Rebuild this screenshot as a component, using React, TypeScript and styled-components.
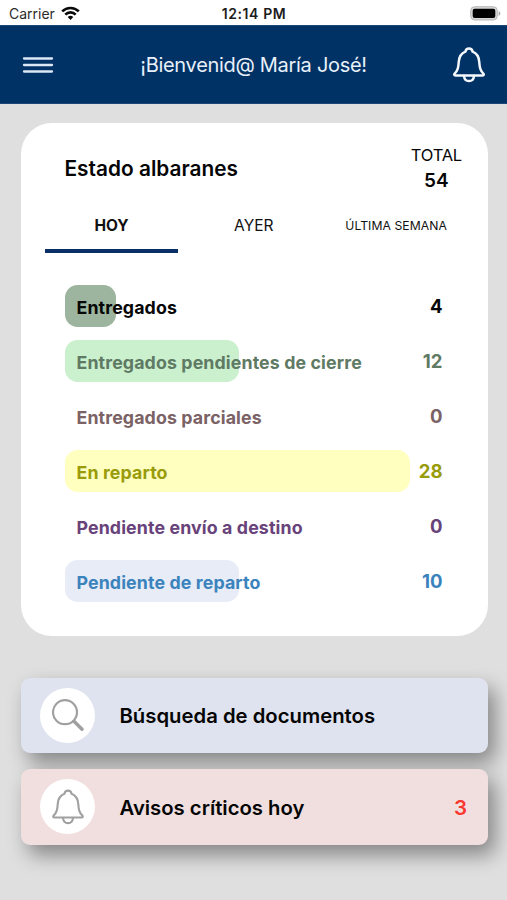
import React from "react";
import styled, { createGlobalStyle } from "styled-components";

const GlobalStyle = createGlobalStyle`
  * { box-sizing: border-box; }
  body {
    margin: 0;
    background: #dfdfdf;
    font-family: Inter, "Liberation Sans", sans-serif;
    color: #050505;
  }
`;

const Screen = styled.div`
  display: flex;
  flex-direction: column;
  width: 507px;
  height: 900px;
  overflow: hidden;
  background: #dfdfdf;
`;

const StatusBar = styled.div`
  display: grid;
  grid-template-columns: 1fr auto 1fr;
  align-items: center;
  height: 25px;
  padding: 2px 6px 0 9px;
  background: #fff;
  line-height: 18px;
`;

const Carrier = styled.div`
  display: flex;
  align-items: center;
  gap: 6px;
  font-size: 14px;
  letter-spacing: 0;
  color: #2b2b2b;
`;

const Clock = styled.div`
  padding-right: 2px;
  font-size: 14px;
  font-weight: 600;
  letter-spacing: 0.6px;
  color: #1c1c1c;
`;

const BatteryIcon = styled.svg`
  justify-self: end;
`;

const Header = styled.header`
  display: flex;
  align-items: center;
  justify-content: space-between;
  height: 78.5px;
  padding: 1px 22px 0;
  background: #003265;
  border-top: 1px solid #1d4777;
  border-bottom: 1px solid #1d4777;
`;

const Greeting = styled.h1`
  margin: 1px 0 0;
  font-size: 20px;
  font-weight: 400;
  letter-spacing: -0.3px;
  color: #e8f0fa;
`;

const IconButton = styled.button`
  display: flex;
  padding: 0;
  border: 0;
  background: none;
`;

const Content = styled.main`
  display: flex;
  flex-direction: column;
  padding: 19.5px 19.5px 0 20.5px;
`;

const StatusCard = styled.section`
  height: 513px;
  border-radius: 31px;
  background: #fff;
`;

const CardHead = styled.div`
  display: flex;
  justify-content: space-between;
  height: 82px;
  padding: 20px 25.5px 0 44px;
`;

const CardTitle = styled.h2`
  margin: 12.5px 0 0;
  font-size: 20.8px;
  line-height: 26px;
  font-weight: 600;
  letter-spacing: 0.02px;
`;

const Total = styled.div`
  display: flex;
  flex-direction: column;
  align-items: center;
  font-size: 16.5px;
  line-height: 24px;
  letter-spacing: -0.2px;
`;

const TotalValue = styled.strong`
  font-size: 19px;
  line-height: 28px;
  font-weight: 600;
  letter-spacing: 0;
`;

const Tabs = styled.nav`
  display: grid;
  grid-template-columns: repeat(3, 133px);
  column-gap: 9.3px;
  height: 48px;
  padding-left: 24.5px;
`;

const Tab = styled.button<{ $active?: boolean; $small?: boolean }>`
  padding: 0 0 4px;
  border: 0;
  border-bottom: 4px solid ${(p) => (p.$active ? "#0a2f68" : "transparent")};
  background: none;
  font-family: inherit;
  font-size: ${(p) => (p.$small ? "12.2px" : "15.5px")};
  font-weight: ${(p) => (p.$active ? 700 : 400)};
  letter-spacing: ${(p) => (p.$small ? "0.05px" : "0")};
  color: #111;
`;

const Rows = styled.div`
  display: flex;
  flex-direction: column;
  gap: 12.5px;
  padding: 31.5px 45px 0 44px;
`;

const Row = styled.div<{ $color: string }>`
  display: grid;
  grid-template-columns: 1fr auto;
  height: 42.5px;
  color: ${(p) => p.$color};
`;

const Bar = styled.div<{ $color: string }>`
  grid-area: 1 / 1 / 2 / 3;
  border-radius: 12.5px;
  background: ${(p) => p.$color};
`;

const RowLabel = styled.span`
  grid-area: 1 / 1;
  padding: 10px 0 0 12px;
  font-size: 17.8px;
  line-height: 26px;
  font-weight: 650;
  letter-spacing: 0.11px;
  white-space: nowrap;
`;

const RowValue = styled.span`
  grid-area: 1 / 2;
  padding-top: 8px;
  font-size: 18.6px;
  line-height: 26px;
  font-weight: 650;
`;

const Actions = styled.div`
  display: flex;
  flex-direction: column;
  gap: 16px;
  padding-top: 41.5px;
`;

const Action = styled.button<{ $tint: string }>`
  display: flex;
  align-items: center;
  height: 75.5px;
  padding: 0 20.5px 0 19.5px;
  border: 0;
  border-radius: 9px;
  background: ${(p) => p.$tint};
  box-shadow: 7px 10px 20px rgba(0, 0, 0, 0.4);
  font-family: inherit;
  color: #050505;
`;

const IconCircle = styled.span`
  display: grid;
  place-items: center;
  width: 55px;
  height: 55px;
  border-radius: 50%;
  background: #fff;
`;

const ActionLabel = styled.span`
  margin: 1px 0 0 24.5px;
  font-size: 20.3px;
  font-weight: 600;
`;

const Alerts = styled.span`
  margin: 1px 0 0 auto;
  font-size: 20.5px;
  font-weight: 600;
  color: #f9372e;
`;

const BellIcon = ({ color, width }: { color: string; width: number }) => (
  <svg width="32" height="36" viewBox="0 0 32 36" fill="none" stroke={color} strokeWidth={width} strokeLinejoin="round" strokeLinecap="round">
    <path d="M12.400 4.700C12.800 2.600 14 1.600 16 1.600s3.200 1 3.600 3.100c4.300 1.700 6.200 5.300 6.600 9.800.5 6.200.9 8.700 4.100 12 .9 1 .5 2-.7 2H2.400c-1.200 0-1.600-1-.7-2 3.200-3.300 3.600-5.800 4.100-12 .4-4.500 2.300-8.100 6.600-9.800Z" />
    <path d="M11 29c.3 3.100 2.200 5.100 5 5.100s4.700-2 5-5.100" />
  </svg>
);

const statuses = [
  { label: "Entregados", value: 4, width: 51, color: "#070707", bar: "#9db59f" },
  { label: "Entregados pendientes de cierre", value: 12, width: 174, color: "#5f7a64", bar: "#caf0cd" },
  { label: "Entregados parciales", value: 0, width: 0, color: "#7a6265", bar: "transparent" },
  { label: "En reparto", value: 28, width: 345, color: "#999b0b", bar: "#ffffc0" },
  { label: "Pendiente envío a destino", value: 0, width: 0, color: "#68427a", bar: "transparent" },
  { label: "Pendiente de reparto", value: 10, width: 174, color: "#3b83bd", bar: "#e8ecf6" },
];

export default function App() {
  return (
    <>
      <GlobalStyle />
      <Screen>
        <StatusBar>
          <Carrier>
            Carrier
            <svg width="19" height="15" viewBox="0 0 19 15" fill="none" stroke="#0a0a0a" strokeWidth="2.7">
              <path d="M1.200 5.400a11.800 11.800 0 0 1 16.600 0" />
              <path d="M4.300 8.600a7.400 7.400 0 0 1 10.400 0" />
              <path d="M9.500 14 6.700 11.100a4 4 0 0 1 5.600 0Z" fill="#0a0a0a" stroke="none" />
            </svg>
          </Carrier>
          <Clock>12:14 PM</Clock>
          <BatteryIcon width="31" height="15" viewBox="0 0 31 15">
            <rect x="0.700" y="0.700" width="26.600" height="13.300" rx="4" fill="#d6d6d6" stroke="#b9b9b9" strokeWidth="1" />
            <rect x="2.700" y="2.700" width="22.600" height="9.300" rx="2" fill="#000" />
            <path d="M28.600 5v5c1.100-.4 1.700-1.300 1.700-2.500S29.700 5.400 28.600 5Z" fill="#aaa" />
          </BatteryIcon>
        </StatusBar>
        <Header>
          <IconButton aria-label="Menú">
            <svg width="32" height="18" viewBox="0 0 32 18" stroke="#dce8f6" strokeWidth="2.300" strokeLinecap="round">
              <path d="M2 2.500h28M2 9h28M2 15.500h28" />
            </svg>
          </IconButton>
          <Greeting>¡Bienvenid@ María José!</Greeting>
          <IconButton aria-label="Avisos">
            <BellIcon color="#f4f8fc" width={2.5} />
          </IconButton>
        </Header>
        <Content>
          <StatusCard>
            <CardHead>
              <CardTitle>Estado albaranes</CardTitle>
              <Total>
                TOTAL
                <TotalValue>54</TotalValue>
              </Total>
            </CardHead>
            <Tabs>
              <Tab $active>HOY</Tab>
              <Tab>AYER</Tab>
              <Tab $small>ÚLTIMA SEMANA</Tab>
            </Tabs>
            <Rows>
              {statuses.map((s) => (
                <Row key={s.label} $color={s.color}>
                  <Bar $color={s.bar} style={{ width: s.width }} />
                  <RowLabel>{s.label}</RowLabel>
                  <RowValue>{s.value}</RowValue>
                </Row>
              ))}
            </Rows>
          </StatusCard>
          <Actions>
            <Action $tint="#dfe3ef">
              <IconCircle>
                <svg width="32" height="33" viewBox="0 0 32 33" fill="none" stroke="#a0a0a0" strokeLinecap="round">
                  <circle cx="13" cy="13.200" r="12" strokeWidth="2.200" />
                  <path d="m22 22.200 8 8" strokeWidth="3.400" />
                </svg>
              </IconCircle>
              <ActionLabel>Búsqueda de documentos</ActionLabel>
            </Action>
            <Action $tint="#f0dfde">
              <IconCircle>
                <BellIcon color="#a0a0a0" width={2.100} />
              </IconCircle>
              <ActionLabel>Avisos críticos hoy</ActionLabel>
              <Alerts>3</Alerts>
            </Action>
          </Actions>
        </Content>
      </Screen>
    </>
  );
}
